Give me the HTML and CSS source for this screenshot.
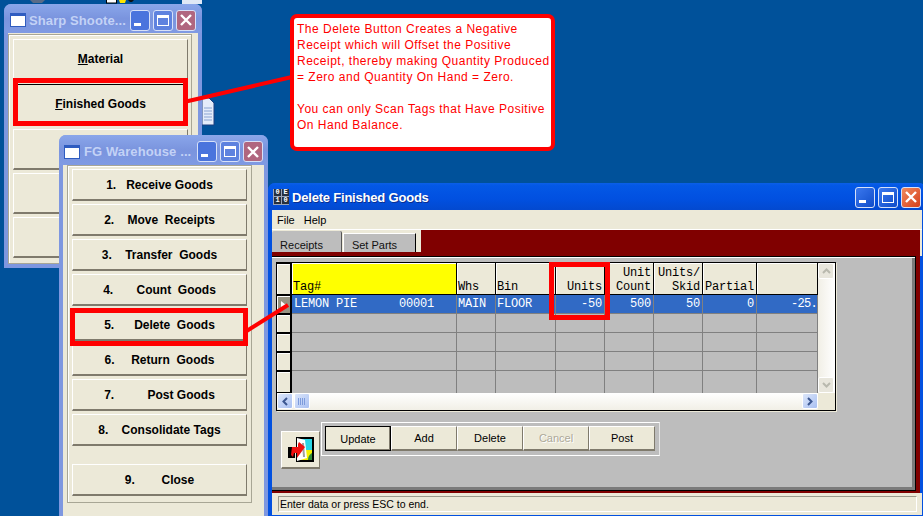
FILE: index.html
```html
<!DOCTYPE html>
<html lang="en">
<head>
  <meta charset="UTF-8">
  <title>Delete Finished Goods</title>
  <link rel="stylesheet" href="styles.css">
</head>
<body>
  <div class="desktop">
    <!-- bits of desktop icons peeking out -->
    <svg class="desk-icons" width="923" height="130" viewBox="0 0 923 130">
      <path d="M30 0h15l-3 3h-9z" fill="#5a6c88"/>
      <rect x="106.500" y="-1" width="10" height="4" fill="#fff" stroke="#000"/>
      <path d="M119 0h7l-1 3h-5z" fill="#ffe400"/>
      <path d="M128 0h6l-2 2h-2z" fill="#111"/>
      <rect x="182" y="0" width="20" height="4" fill="#dfe8f6"/>
      <path d="M202 98h7l5 5v22h-12z" fill="#e4ecfa" stroke="#1d3f80"/>
      <path d="M204 108h8M204 111h8M204 114h8M204 117h8M204 120h8" stroke="#8aa4d2"/>
    </svg>

    <!-- sharp shooter window -->
    <div class="win win-inactive win-sharp">
      <div class="titlebar">
        <svg class="app-icon" width="16" height="14" viewBox="0 0 16 14"><rect x=".5" y=".5" width="15" height="13" fill="#fff" stroke="#2f5cc0"/><rect x="1" y="1" width="14" height="2" fill="#2f5cc0"/></svg>
        <span class="title">Sharp Shoote...</span>
        <span class="capbtn cap-min"><i></i></span>
        <span class="capbtn cap-max"><i></i></span>
        <span class="capbtn cap-close"><svg width="12" height="12" viewBox="0 0 12 12"><path d="M1 1l10 10M11 1L1 11" stroke="#fff" stroke-width="2.400"/></svg></span>
      </div>
      <div class="menu-panel">
        <div class="menu-inner">
          <button class="cmd cmd-tall"><u>M</u>aterial</button>
          <button class="cmd cmd-tall cmd-fg"><u>F</u>inished Goods</button>
          <button class="cmd cmd-tall"></button>
          <button class="cmd cmd-tall"></button>
          <button class="cmd cmd-tall"></button>
        </div>
      </div>
    </div>

    <!-- warehouse window -->
    <div class="win win-inactive win-fg">
      <div class="titlebar">
        <svg class="app-icon" width="16" height="14" viewBox="0 0 16 14"><rect x=".5" y=".5" width="15" height="13" fill="#fff" stroke="#2f5cc0"/><rect x="1" y="1" width="14" height="2" fill="#2f5cc0"/></svg>
        <span class="title">FG Warehouse ...</span>
        <span class="capbtn cap-min"><i></i></span>
        <span class="capbtn cap-max"><i></i></span>
        <span class="capbtn cap-close"><svg width="12" height="12" viewBox="0 0 12 12"><path d="M1 1l10 10M11 1L1 11" stroke="#fff" stroke-width="2.400"/></svg></span>
      </div>
      <div class="menu-panel">
        <div class="menu-inner">
          <button class="cmd">1.   Receive Goods</button>
          <button class="cmd">2.    Move  Receipts</button>
          <button class="cmd">3.    Transfer  Goods</button>
          <button class="cmd">4.       Count  Goods</button>
          <button class="cmd">5.      Delete  Goods</button>
          <button class="cmd">6.     Return  Goods</button>
          <button class="cmd">7.          Post Goods</button>
          <button class="cmd">8.    Consolidate Tags</button>
          <button class="cmd cmd-close">9.        Close</button>
        </div>
      </div>
    </div>

    <!-- main window -->
    <div class="win win-main">
      <div class="titlebar">
        <span class="oe-icon"><b>0</b><b>E</b><b>1</b><b>0</b></span>
        <span class="title">Delete Finished Goods</span>
        <span class="capbtn cap-min"><i></i></span>
        <span class="capbtn cap-max"><i></i></span>
        <span class="capbtn cap-close"><svg width="12" height="12" viewBox="0 0 12 12"><path d="M1 1l10 10M11 1L1 11" stroke="#fff" stroke-width="2.400"/></svg></span>
      </div>
      <div class="menubar"><span>File</span><span>Help</span></div>
      <div class="tabs">
        <span class="tab tab-on">Receipts</span>
        <span class="tab">Set Parts</span>
        <span class="tab-fill"></span>
      </div>
      <div class="page">
        <div class="grid-wrap">
          <div class="grid-top">
            <table class="grid">
              <colgroup>
                <col class="c-ind"><col class="c-tag"><col class="c-whs"><col class="c-bin"><col class="c-units"><col class="c-count"><col class="c-skid"><col class="c-part"><col class="c-last">
              </colgroup>
              <thead>
                <tr>
                  <th class="ind"></th>
                  <th class="tag-h">Tag#</th>
                  <th class="left">Whs</th>
                  <th class="left">Bin</th>
                  <th>Units</th>
                  <th>Unit<br>Count</th>
                  <th>Units/<br>Skid</th>
                  <th>Partial</th>
                  <th></th>
                </tr>
              </thead>
              <tbody>
                <tr class="sel">
                  <td class="ind"><span class="arrow"></span></td>
                  <td class="tag">LEMON PIE      00001</td>
                  <td class="left">MAIN</td>
                  <td class="left">FLOOR</td>
                  <td>-50</td>
                  <td>500</td>
                  <td>50</td>
                  <td>0</td>
                  <td class="clip">-25.</td>
                </tr>
                <tr><td class="ind"></td><td></td><td></td><td></td><td></td><td></td><td></td><td></td><td></td></tr>
                <tr><td class="ind"></td><td></td><td></td><td></td><td></td><td></td><td></td><td></td><td></td></tr>
                <tr><td class="ind"></td><td></td><td></td><td></td><td></td><td></td><td></td><td></td><td></td></tr>
                <tr><td class="ind"></td><td></td><td></td><td></td><td></td><td></td><td></td><td></td><td></td></tr>
              </tbody>
            </table>
            <div class="vscroll">
              <span class="sb sb-off">
                <svg width="9" height="6" viewBox="0 0 9 6"><path d="M1 5l3.500-3.500L8 5" fill="none" stroke="#b9b9ae" stroke-width="2"/></svg>
              </span>
              <span class="sb sb-off">
                <svg width="9" height="6" viewBox="0 0 9 6"><path d="M1 1l3.500 3.500L8 1" fill="none" stroke="#b9b9ae" stroke-width="2"/></svg>
              </span>
            </div>
          </div>
          <div class="hscroll">
            <span class="sb sb-on">
              <svg width="6" height="9" viewBox="0 0 6 9"><path d="M5 1L1.500 4.500 5 8" fill="none" stroke="#3b5690" stroke-width="2"/></svg>
            </span>
            <span class="sb sb-on sb-thumb">
              <svg width="8" height="7" viewBox="0 0 8 7"><path d="M.5 0v7M2.500 0v7M4.500 0v7M6.500 0v7" stroke="#7d9bdc"/></svg>
            </span>
            <span class="hs-track"></span>
            <span class="sb sb-on">
              <svg width="6" height="9" viewBox="0 0 6 9"><path d="M1 1l3.500 3.500L1 8" fill="none" stroke="#3b5690" stroke-width="2"/></svg>
            </span>
            <span class="corner"></span>
          </div>
        </div>
        <div class="actions">
          <button class="door-btn">
            <svg width="26" height="25" viewBox="0 0 26 25">
              <rect x="8" y="0" width="18" height="25" fill="#000"/>
              <rect x="10" y="2" width="14" height="11" fill="#29d6e6"/>
              <rect x="10" y="13" width="14" height="10" fill="#f4f000"/>
              <path d="M20 23c0-4 2-6 4-7v7z" fill="#2e8b3a"/>
              <path d="M9 1l8 2 2 18-10 3z" fill="#fff"/>
              <path d="M15 6l1 14" stroke="#a0a0a0" stroke-width="2"/>
              <rect x="0" y="10" width="7" height="11" fill="#000"/>
              <path d="M4 10h6V7l1-2 6 5-8 11v-5H6l-1 4-2-2z" fill="#f01010"/>
            </svg>
          </button>
          <div class="btn-group">
            <button class="act act-default">Update</button>
            <button class="act">Add</button>
            <button class="act">Delete</button>
            <button class="act act-off">Cancel</button>
            <button class="act">Post</button>
          </div>
        </div>
      </div>
      <div class="status"><span>Enter data or press ESC to end.</span></div>
    </div>

    <!-- annotation overlay -->
    <svg class="marks" width="923" height="516" viewBox="0 0 923 516">
      <g fill="none" stroke="#ff0000" stroke-width="5">
        <rect x="15.500" y="80.500" width="170" height="43"/>
        <rect x="72.500" y="310.500" width="173" height="33"/>
        <rect x="551.500" y="264.500" width="56" height="53"/>
      </g>
      <path d="M184 102L292 77" stroke="#ff0000" stroke-width="4" fill="none"/>
      <path d="M245 332L288 305" stroke="#ff0000" stroke-width="4" fill="none"/>
    </svg>

    <div class="callout">
      <p>The Delete Button Creates a Negative<br>Receipt which will Offset the Positive<br>Receipt, thereby making Quantity Produced<br>= Zero and Quantity On Hand = Zero.</p>
      <p>You can only Scan Tags that Have Positive<br>On Hand Balance.</p>
    </div>
  </div>
</body>
</html>
```

FILE: styles.css
```css
* {
  box-sizing: border-box;
}
html, body {
  margin: 0;
  height: 100%;
  overflow: hidden;
}
body {
  font-family: "Liberation Sans", sans-serif;
  font-size: 12px;
  color: #000;
}
.desktop {
  position: relative;
  width: 923px;
  height: 516px;
  background: #00519a;
  overflow: hidden;
}
.desk-icons {
  position: absolute;
  left: 0;
  top: 0;
}

/* windows */
.win {
  position: absolute;
  display: flex;
  flex-direction: column;
  border-radius: 7px 7px 0 0;
  padding: 0 4px 4px;
}
.win-inactive {
  background: #7e97e0;
}
.win-sharp {
  left: 4px;
  top: 4px;
  width: 198px;
  height: 264px;
}
.win-fg {
  left: 59px;
  top: 135px;
  width: 209px;
  height: 395px;
}
.win-main {
  left: 268px;
  top: 183px;
  width: 658px;
  height: 340px;
  background: #0351e0;
}
.titlebar {
  display: flex;
  align-items: center;
  flex: none;
  height: 29px;
  margin: 0 -4px;
  padding: 3px 6px 0;
  border-radius: 7px 7px 0 0;
  background: linear-gradient(#8aa6ea, #7a94de 50%, #7f9ae3);
}
.win-fg .titlebar {
  height: 30px;
  padding: 3px 5px 0;
}
.win-main .titlebar {
  height: 27px;
  padding: 1px 5px 0;
  background: linear-gradient(#0a5fe8 0, #0358e6 10%, #0150e0 60%, #0349cf);
}
.app-icon {
  flex: none;
}
.oe-icon {
  flex: none;
  display: grid;
  grid-template-columns: 7px 7px;
  grid-auto-rows: 7px;
  gap: 1px;
  width: 16px;
  height: 16px;
  padding: 0 1px;
  background: #9aa4b8;
}
.oe-icon b {
  display: block;
  font: bold 7px/7px "Liberation Mono", monospace;
  text-align: center;
  color: #fff;
  background: #26303f;
}
.title {
  flex: 1;
  margin-left: 3px;
  font-size: 13px;
  font-weight: bold;
  color: #c3d2f6;
  white-space: nowrap;
  letter-spacing: .1px;
}
.win-fg .title {
  margin-left: 4px;
}
.win-main .title {
  color: #fff;
  letter-spacing: -.2px;
  text-shadow: 1px 1px 0 #0a2f90;
}
.capbtn {
  display: flex;
  align-items: center;
  justify-content: center;
  flex: none;
  width: 20px;
  height: 21px;
  margin-left: 3px;
  border: 1px solid #d7e1f8;
  border-radius: 3px;
}
.cap-min, .cap-max {
  background: #4a74dd;
}
.win-inactive .cap-max {
  background: #5e82df;
}
.cap-close {
  background: #b0667f;
}
.win-main .cap-min, .win-main .cap-max {
  background: linear-gradient(135deg, #3b78ee, #0f4cc9);
}
.win-main .cap-close {
  background: linear-gradient(135deg, #ef8a5e, #d6401c);
}
.cap-min i {
  width: 7px;
  height: 3px;
  margin: 8px 5px 0 0;
  background: #fff;
}
.cap-max i {
  width: 12px;
  height: 11px;
  border: 1px solid #fff;
  border-top-width: 3px;
}

/* left hand button menus */
.menu-panel {
  flex: 1;
  min-height: 0;
  background: #ece9d8;
  padding: 1px 6px 0 0;
}
.win-fg .menu-panel {
  padding: 0 12px 0 4px;
}
.menu-inner {
  display: flex;
  flex-direction: column;
  height: 338px;
  padding: 3px 4px 0;
  border: 1px solid #a8a695;
  box-shadow: inset 1px 1px 0 #fff;
}
.win-sharp .menu-inner {
  height: 100%;
  padding: 4px 3px 0 4px;
  overflow: hidden;
}
.cmd {
  flex: none;
  height: 32px;
  margin-bottom: 3px;
  padding: 0;
  background: #ece9d8;
  border: 1px solid;
  border-color: #fff #7f7a6c #7f7a6c #fff;
  border-bottom-width: 2px;
  font: bold 12px "Liberation Sans", sans-serif;
  white-space: pre;
  color: #000;
}
.cmd-tall {
  height: 41px;
  margin-bottom: 3px;
}
.cmd-fg {
  height: 40px;
  margin-top: 1px;
  margin-bottom: 5px;
  border-top: 1px solid #000;
}
.cmd-close {
  margin-top: 15px;
}

/* main window */
.menubar {
  flex: none;
  display: flex;
  gap: 9px;
  height: 20px;
  padding: 4px 5px 0;
  font-size: 11px;
  background: #ece9d8;
  border-bottom: 1px solid #fff;
}
.tabs {
  flex: none;
  display: flex;
  align-items: flex-start;
  height: 26px;
  background: #ece9d8;
  font-size: 11px;
}
.tab {
  display: flex;
  align-items: center;
  justify-content: center;
  width: 73px;
  height: 24px;
  margin-top: 3px;
  padding: 0 10px 0 0;
  background: #bdbdbd;
  color: #111;
  border: 1px solid;
  border-color: #fff #000 #000 #fff;
}
.tab-on {
  width: 70px;
  height: 26px;
  margin-top: 1px;
  margin-right: 1px;
  padding: 1px 10px 0 0;
  border: 0;
  border-right: 1px solid #555;
  border-radius: 2px 2px 0 0;
}
.tab-fill {
  flex: 1;
  height: 25px;
  margin: 0 2px 0 5px;
  background: #800000;
}
.page {
  flex: none;
  height: 235px;
  margin: 0 6px 2px 0;
  padding: 5px 0 0 4px;
  background: #bdbdbd;
  border: 1px solid #000;
  border-left: 0;
  box-shadow: inset 0 1px 0 #fff, inset -3px -3px 0 #7b7b7b;
  outline: 4px solid #800000;
  clip-path: inset(-4px -4px -2px 0);
}

/* grid */
.grid-wrap {
  width: 560px;
  border: 1px solid #000;
  box-shadow: 1px 1px 0 #ece9d8;
  background: #fff;
}
.grid-top {
  display: flex;
  height: 130px;
  background: #bdbdbd;
}
.grid {
  width: 541px;
  flex: none;
  table-layout: fixed;
  border-collapse: separate;
  border-spacing: 0;
  font: 12px/14px "Liberation Mono", monospace;
  letter-spacing: -.2px;
}
.c-ind { width: 15px; }
.c-tag { width: 165px; }
.c-whs { width: 39px; }
.c-bin { width: 60px; }
.c-units { width: 49px; }
.c-count { width: 49px; }
.c-skid { width: 49px; }
.c-part { width: 54px; }
.c-last { width: 61px; }
.grid th, .grid td {
  padding: 0 2px 0 1px;
  text-align: right;
  overflow: hidden;
  white-space: nowrap;
}
.grid th {
  height: 32px;
  vertical-align: bottom;
  font-weight: normal;
  background: #ece9d8;
  border-right: 1px solid #000;
  border-bottom: 1px solid #000;
  box-shadow: inset 1px 1px 0 #fff;
}
.grid th.tag-h {
  background: #ffff00;
  text-align: left;
}
.grid .left {
  text-align: left;
}
.grid td {
  height: 19px;
  border-right: 1px solid #808080;
  border-bottom: 1px solid #808080;
}
.grid tbody tr:last-child td {
  height: 22px;
  border-bottom: 0;
}
.grid tbody tr:last-child td.ind {
  border-bottom: 1px solid #000;
}
.grid td.tag {
  padding-left: 2px;
  white-space: pre;
  text-align: left;
}
.grid td.clip {
  padding: 0;
  letter-spacing: -.7px;
}
.sel td {
  background: #316ac5;
  color: #fff;
}
.grid td.ind, .grid th.ind {
  background: #ece9d8;
  border: 1px solid #000;
  border-width: 1px 2px 1px 0;
  box-shadow: inset 1px 1px 0 #fff;
  padding: 0;
}
.grid .sel td.ind {
  background: #979483;
}
.arrow {
  display: block;
  width: 0;
  height: 0;
  margin-left: 4px;
  border: 4px solid transparent;
  border-left: 5px solid #fff;
  border-right: 0;
}

/* scroll bars */
.sb {
  display: flex;
  align-items: center;
  justify-content: center;
  flex: none;
  width: 16px;
  height: 16px;
  border: 1px solid #fff;
  border-radius: 2px;
}
.sb-off {
  background: #e8e6dc;
}
.sb-on {
  background: linear-gradient(135deg, #dce6fa, #a9c0f2);
}
.sb-thumb {
  margin-left: 1px;
}
.vscroll {
  flex: none;
  width: 17px;
  display: flex;
  flex-direction: column;
  justify-content: space-between;
  background: linear-gradient(90deg, #f1efe6, #fff);
}
.hscroll {
  display: flex;
  height: 17px;
  background: linear-gradient(#fff, #f1efe6);
}
.hs-track {
  flex: 1;
}
.corner {
  flex: none;
  width: 17px;
  background: #ece9d8;
}

/* action buttons */
.actions {
  display: flex;
  align-items: flex-start;
  margin-top: 11px;
  padding-left: 5px;
}
.door-btn {
  width: 39px;
  height: 38px;
  margin-top: 9px;
  margin-right: 1px;
  padding: 0;
  display: flex;
  align-items: center;
  justify-content: center;
  background: #ece9d8;
  border: 1px solid;
  border-color: #fff #7f7a6c #7f7a6c #fff;
  border-bottom-width: 2px;
}
.btn-group {
  display: flex;
  padding: 3px 4px 4px 3px;
  border: 1px solid #fff;
  border-right-color: #e6e6e6;
}
.act {
  width: 66px;
  height: 25px;
  padding: 0;
  background: #ece9d8;
  border: 1px solid;
  border-color: #fff #7f7a6c #7f7a6c #fff;
  border-bottom-width: 2px;
  font: 11px "Liberation Sans", sans-serif;
  color: #000;
}
.act-default {
  border: 1px solid #000;
  box-shadow: inset -1px -1px 0 #7f7a6c;
}
.act-off {
  color: #aca899;
  text-shadow: 1px 1px 0 #fff;
}

/* status line */
.status {
  flex: none;
  height: 22px;
  padding: 3px 5px 3px 6px;
  background: #ece9d8;
}
.status span {
  display: block;
  height: 16px;
  padding-left: 1px;
  font-size: 10.500px;
  line-height: 15px;
  border: 1px solid;
  border-color: #9a9a8c #fff #fff #9a9a8c;
}

/* annotations */
.marks {
  position: absolute;
  left: 0;
  top: 0;
  pointer-events: none;
}
.callout {
  position: absolute;
  left: 290px;
  top: 14px;
  width: 265px;
  height: 137px;
  padding: 3px 0 0 3px;
  background: #fff;
  border: 4px solid #ff0000;
  border-radius: 7px;
  color: #ff0000;
  font: 12px/16px "Liberation Sans", sans-serif;
  letter-spacing: .5px;
  white-space: nowrap;
}
.callout p {
  margin: 0 0 16px;
}
```
